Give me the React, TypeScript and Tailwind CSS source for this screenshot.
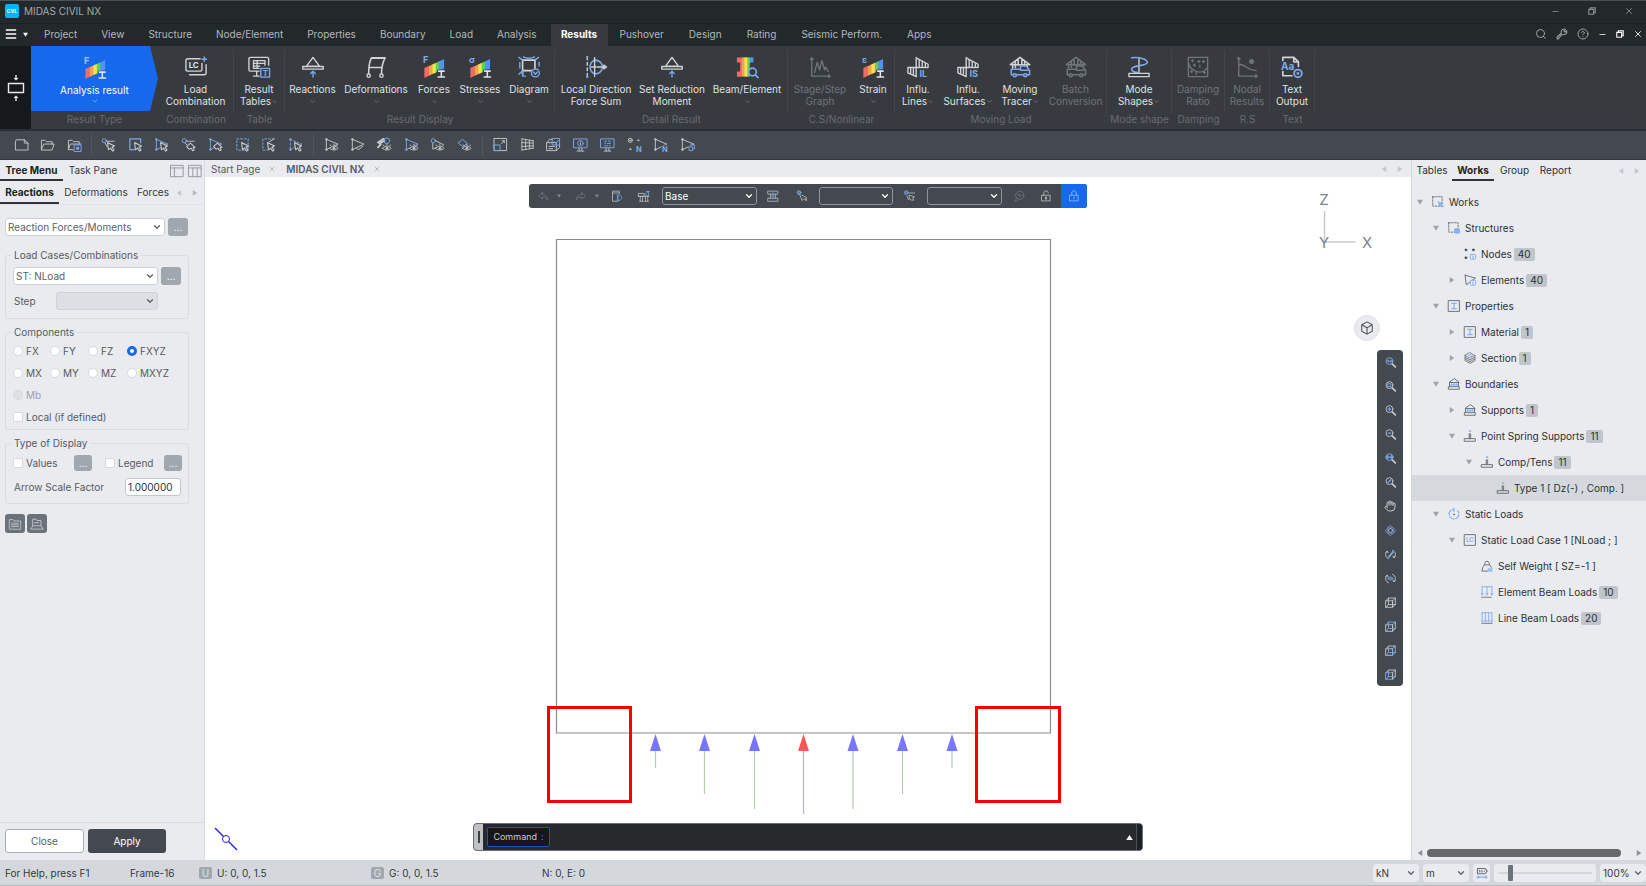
import React from "react";
import { ChevronDown, CircleHelp, Hand, Menu, Minus, Search, X } from "lucide-react";

const G = "#c3c7cb";
const B = "#7ea8ea";

type Kids = { children?: React.ReactNode };

/* ---------- drawing helpers ---------- */

function Ic({ children, s = "size-[15px]", box = 16, w = 1, c = G }: Kids & { s?: string; box?: number; w?: number; c?: string }) {
  return (
    <svg viewBox={`0 0 ${box} ${box}`} className={`${s} shrink-0 overflow-visible`} fill="none" stroke={c} strokeWidth={w} strokeLinecap="round" strokeLinejoin="round" aria-hidden="true">
      {children}
    </svg>
  );
}

const Cursor = () => <path d="M7 6l7.5 3.5-2.6 1.3 2 3-1.5 1.2-2.2-3.2L8 13.6z" fill="#43494f" strokeWidth="1.200" />;
const Lasso = () => <path d="M6 10l4-3.5L15 11l-2 .3 1 2.600-1.600.7-1.400-2.600L8.600 13z" fill="#43494f" strokeWidth="1.200" />;
const Tri = ({ c = G, dash }: { c?: string; dash?: string }) => (
  <>
    <path d="M2.500 2.500l12 5M2.500 2.500v11M2.500 13.500L14 8" stroke={c} strokeDasharray={dash} />
    <circle cx="2.500" cy="2.500" r=".9" stroke={c} />
    <circle cx="2.500" cy="13.500" r=".9" stroke={c} />
  </>
);
const Eye = () => (
  <>
    <path d="M6 12c2-3 7-3 9 0-2 2.600-7 2.600-9 0z" fill="#43494f" />
    <circle cx="10.500" cy="12" r="1.100" fill={G} />
    <path d="M7.500 9.500l-.8-1M10.500 8.500V7.500M13.500 9.500l.8-1" />
  </>
);
const Letter = ({ x, y, size, fill = B, children }: Kids & { x: number; y: number; size: number; fill?: string }) => (
  <text x={x} y={y} fontSize={size} fill={fill} stroke="none" fontFamily="Inter, sans-serif" fontWeight="700">{children}</text>
);

/* ---------- quick-access toolbar ---------- */

const fileTools: [string, React.ReactNode][] = [
  ["New", <path d="M1.500 13.500v-9l1-1.500h8.500l4 3.500v7zM11 3v3.500h4" />],
  ["Open", <path d="M1.500 13V3.500h4L7 5h6v2.500M1.500 13.500l2.500-6h11l-2 6z" />],
  ["Open recent", <><path d="M1.500 13V3.500h4L7 5h6v2M1.500 13.500l2-6H15M1.500 13.500h5" /><path d="M8 8.500h7v7H8z" stroke={B} /><path d="M10.500 11h2v2h-2z" fill={B} stroke={B} /></>],
];

const selectTools: [string, React.ReactNode][] = [
  ["Select single", <><circle cx="3.500" cy="4" r="2.200" stroke={B} /><path d="M6 4.500h8M4.500 6.500l2 4" /><Cursor /></>],
  ["Select window", <><path d="M13.500 6V2H2v11.500h5" stroke={B} strokeWidth="1.300" /><Cursor /></>],
  ["Select polygon", <><Tri c={B} /><Cursor /></>],
  ["Unselect single", <><circle cx="3.500" cy="4" r="2.200" stroke={B} /><path d="M6 4.500h8M4.500 6.500l2 2" /><Lasso /></>],
  ["Unselect polygon", <><Tri c={B} /><Lasso /></>],
  ["Select intersect", <><path d="M2 2h12v12H2z" stroke={B} strokeDasharray="2 2" /><Cursor /></>],
  ["Select plane", <><path d="M14 2H2v12h5" stroke={B} strokeDasharray="2 2" /><path d="M9 5l5-3" stroke={G} /><Cursor /></>],
  ["Select volume", <><Tri c={B} dash="2 2" /><Cursor /></>],
];

const activeTools: [string, React.ReactNode][] = [
  ["Activate", <><Tri /><Eye /></>],
  ["Inverse activate", <><Tri /><path d="M7 12l2 1.500 5-4" /></>],
  ["Activate previous", <><path d="M1 6l6-4M3 7l5-3M1 11l3-3" strokeWidth="2" /><circle cx="10.500" cy="4" r="3" stroke={B} /><Eye /></>],
  ["Activate identity", <><Tri c={B} /><Eye /></>],
  ["Activate node", <><circle cx="3.500" cy="4" r="2.200" stroke={B} /><path d="M6 4l8 4M3 7v6l4-2" /><Eye /></>],
  ["Activate all", <><path d="M1.500 6L6 2.500l5 4.500-4.500 3z" stroke={B} /><Eye /></>],
];

const viewTools: [string, React.ReactNode][] = [
  ["Zoom region", <><path d="M1.500 1.500h13v13h-13z" /><path d="M1.500 8.500h6v6h-6z" stroke={B} /><path d="M9 7l3-3M9.800 4H12v2.200" /></>],
  ["Perspective", <path d="M2 2l12 2M2 6l12 .5M2 10l12-.5M2 14l12-2M2 2v12M6 2.500v11M10 3.500v9M14 4v8" />],
  ["Render view", <><path d="M1 6h10v8.500H1zM1 6l3-3.500h3M14.500 9V11L11 14.500M3 10h6M3 12.500h4" /><path d="M7 1.500h7.500v7H7z" stroke={B} /><path d="M9 5l1.500 1.500 3-3" stroke={B} /></>],
  ["Display information", <><path d="M1 2h14v9.500H1z" stroke={B} /><circle cx="8" cy="6.800" r="3" stroke={B} /><path d="M8 6.500v1.500M8 5v.1M4.500 15h7M6.500 12v2.500M9.500 12v2.500" /></>],
  ["Display option", <><path d="M1 2h14v9.500H1z" stroke={B} /><path d="M5 4.500h2M9 4.500h2M5 7h1M8 7h3M5 9.500h3M10 9.500h1" stroke={B} /><path d="M4.500 15h7M6.500 12v2.500M9.500 12v2.500" /></>],
  ["Node number", <><circle cx="3.500" cy="3.500" r="2.200" /><circle cx="3.500" cy="3.500" r=".6" /><circle cx="12" cy="3.500" r=".6" fill={G} /><circle cx="3.500" cy="13" r=".6" fill={G} /><Letter x={9.500} y={15.500} size={8}>N</Letter></>],
  ["Element number", <><Tri /><rect x="9" y="9" width="7" height="7" fill="#43494f" stroke="none" /><Letter x={9.500} y={15.500} size={8}>N</Letter></>],
  ["Element property", <><Tri /><rect x="9" y="9" width="7" height="7" fill="#43494f" stroke="none" /><path d="M9.500 10.500h4v4h-4zM11.500 8.500h4v4h-2" stroke={B} strokeDasharray="2 1" /></>],
];

function ToolGroup({ tools, cls }: { tools: [string, React.ReactNode][]; cls: string }) {
  return (
    <div className={`grid ${cls}`}>
      {tools.map(([name, art]) => (
        <button key={name} type="button" aria-label={name} className="flex h-6 items-center justify-center">
          <Ic>{art}</Ic>
        </button>
      ))}
    </div>
  );
}

/* ---------- ribbon ---------- */

const Rainbow = ({ glyph, light }: { glyph: string; light?: boolean }) => (
  <>
    <g stroke="none">
      <path d="M1.500 13l4.600-2v10.500L1.500 24z" fill="#f56a66" />
      <path d="M6 11.200l4.300-2v10.500L6 21.700z" fill="#f9a04f" />
      <path d="M10 9.400l4.300-2v10.500L10 19.900z" fill="#f8e04e" />
      <path d="M14 7.500l4.300-2V16L14 18z" fill="#5fcf60" />
      <path d="M18 5.700l5-2.400v11L18 16.100z" fill="#4e93f5" />
    </g>
    <Letter x={0} y={8} size={10} fill={light ? "#9fc3ff" : B}>{glyph}</Letter>
    <path d="M17 16.800h6M20 17v6M16.500 23h7" stroke={light ? "#1668ec" : "#373b40"} strokeWidth="4" />
    <path d="M17 16.500h6M20 17v6M16.500 23h7" stroke="#e2e4e6" strokeWidth="1.700" />
  </>
);
const Truss = () => <path d="M1.500 9.500L12 1.500l10.500 8M3 9.500h18M4 9.500V13M7 6.500v6M10 4v6M14 4v6M17 6.500v4M20 8.500v3" strokeWidth="1.700" />;
const Truck = ({ c }: { c: string }) => (
  <g stroke={c} strokeWidth="1.700">
    <path d="M2.500 20v-5.500h10V11h6.500l3.500 5v4M2.500 20.500H4M8.500 20.500h7M20 20.500h2.500M12.500 15.500h8" />
    <circle cx="6.300" cy="21" r="1.700" />
    <circle cx="17.800" cy="21" r="1.700" />
  </g>
);
const Influence = ({ t }: { t: string }) => (
  <>
    <path d="M1 12.500h22M10 1.500V22M10 2l13 7v3.500M13.300 4v8.500M16.600 6v6.500M20 7.500v5M1 12.500v6l9 4M4 12.500v7M7 12.500v8" strokeWidth="1.500" />
    <rect x="12.500" y="14" width="12" height="10" fill="#373b40" stroke="none" />
    <Letter x={13.500} y={23} size={10}>{t}</Letter>
  </>
);

const art: Record<string, React.ReactNode> = {
  lc: <><path d="M16.500 3H3C1.800 3 1 3.800 1 5v9.500c0 1.200.8 2 2 2h13.500c1.200 0 2-.8 2-2V8M5 20.500h16c1.200 0 2-.8 2-2V9.500" /><path d="M21 1v5M18.500 3.500h5" stroke={B} /><Letter x={4} y={13} size={8.500} fill="#e2e4e6">LC</Letter></>,
  tables: <><path d="M12 16.500H2.500c-1 0-1.500-.5-1.500-1.500V3c0-1 .5-1.500 1.500-1.500h18.500c1 0 1.500.5 1.500 1.500v7M6 22h6M9.500 17v5M6 5h12.500v5M6 5v8.500h6M6 8h12M6 11h7M10 5v8.500" /><path d="M14 13.500h9.500v9.500H14z" stroke={B} fill="#373b40" /><Letter x={16} y={21.500} size={8.500}>T</Letter></>,
  reactions: <><path d="M12 1.500L5 11h14zM.8 11.500h22.400v2.800H.8z" /><path d="M12 23v-6M9.500 19l2.500-2.500 2.500 2.500" stroke={B} /></>,
  deform: <><path d="M4 20V18C4 11 5 6 7 2h15c-3 5-4 10-4 18M5 12.500h13M6.500 2.500h15" strokeWidth="1.700" /><circle cx="4" cy="21.500" r="1.800" fill="#373b40" /><circle cx="18" cy="21.500" r="1.800" fill="#373b40" /></>,
  diagram: <><path d="M5 4v16M18.500 4v12M5 4.500h13.500M5 16h11" strokeWidth="1.800" /><path d="M1 1.500l4 3M22.500 1.500l-4 3M1 20l4-4M6 1c3 2 9 2 12 0M5 17v5h3M2 7v6M23 7v4" stroke={B} /><circle cx="19" cy="18.500" r="4.300" stroke={B} fill="#373b40" /><path d="M17 17.500l2 2.500 2-2.500" stroke={B} /></>,
  direction: <><path d="M2.500 1v22" strokeDasharray="3 3" /><path d="M2.500 1v.1M2.500 23v-.1" stroke={B} strokeWidth="2.500" /><path d="M10 4.500c-6 4-6 11 0 15M10 4.500c8 0 9 6 9 7.500s-1 7.500-9 7.500" stroke={B} strokeWidth="1.700" /><path d="M7 12h14M10.500 2v20" strokeDasharray="5 1.500" strokeWidth="1.600" /><path d="M20.500 10l3 2-3 2z" fill={G} /></>,
  beam: <><path d="M1 1.500h6v21H1V17h3.500V7H1z" fill="#f56a66" stroke="none" /><path d="M6.500 1.500h3v21h-3z" fill="#f9a04f" stroke="none" /><path d="M9 1.500h4v21H9z" fill="#f8e04e" stroke="none" /><path d="M12.500 1.500H16V7l-1 1v14.500h-2.500z" fill="#5fcf60" stroke="none" /><path d="M15.500 1.500H19V7h-3.500z" fill="#4e93f5" stroke="none" /><circle cx="18" cy="17.500" r="4.200" stroke={B} fill="#373b40" strokeWidth="1.800" /><path d="M21 20.500l3 3" stroke={B} strokeWidth="1.800" /></>,
  graph: <path d="M3 2v20h20M1.500 3.500L3 2l1.500 1.500M21.500 20.500L23 22l-1.500 1.500M6 18l3-11 2.500 8L14 5l3 10 1-3 3 5" />,
  mode: <><path d="M12 1.500V18" /><path d="M4 2c8-1 17 1 17 5s-17 3-17 7 4 4 8 4" stroke={B} strokeWidth="1.700" /><path d="M1 19h22v3.500H1z" /></>,
  damping: <><path d="M1.500 1.500h21v21h-21z" /><path d="M1.500 8c3 9 15 14 21 4" /><path d="M6 4v2M5 5h2M13 5v2M12 6h2M18 5v2M17 6h2M8 9v2M7 10h2M14 10v2M5 16v2M4 17h2M10 18v2M19 17v2M18 18h2" /></>,
  nodal: <><path d="M3 1.500v20.500h20M1.500 3L3 1.500 4.500 3M21.500 20.500L23 22l-1.500 1.500M3 9c9 0 7 6 19 7" /><circle cx="17" cy="6" r="2" fill="currentColor" /></>,
  text: <><path d="M2 5V1.500h12l5 5v5M14 1.500v5h5M2 17v4.500h10" strokeWidth="1.800" /><Letter x={0} y={15} size={11}>Aa</Letter><circle cx="18.500" cy="19" r="4.200" stroke={B} fill="#373b40" strokeWidth="2" /><circle cx="18.500" cy="19" r=".8" fill={B} stroke={B} /></>,
};

type Item = { a: React.ReactNode; l1: string; l2?: string; drop?: boolean; w: string; off?: boolean };

const groups: { name: string; items: Item[] }[] = [
  { name: "Combination", items: [{ a: art.lc, l1: "Load", l2: "Combination", w: "w-[75px]" }] },
  { name: "Table", items: [{ a: art.tables, l1: "Result", l2: "Tables", drop: true, w: "w-[50px]" }] },
  {
    name: "Result Display",
    items: [
      { a: art.reactions, l1: "Reactions", drop: true, w: "w-[55px]" },
      { a: art.deform, l1: "Deformations", drop: true, w: "w-[72px]" },
      { a: <Rainbow glyph="F" />, l1: "Forces", drop: true, w: "w-[44px]" },
      { a: <Rainbow glyph="σ" />, l1: "Stresses", drop: true, w: "w-[48px]" },
      { a: art.diagram, l1: "Diagram", drop: true, w: "w-[50px]" },
    ],
  },
  {
    name: "Detail Result",
    items: [
      { a: art.direction, l1: "Local Direction", l2: "Force Sum", w: "w-[82px]" },
      { a: art.reactions, l1: "Set Reduction", l2: "Moment", w: "w-[70px]" },
      { a: art.beam, l1: "Beam/Element", drop: true, w: "w-[80px]" },
    ],
  },
  {
    name: "C.S/Nonlinear",
    items: [
      { a: art.graph, l1: "Stage/Step", l2: "Graph", w: "w-[64px]", off: true },
      { a: <Rainbow glyph="ε" />, l1: "Strain", drop: true, w: "w-[42px]" },
    ],
  },
  {
    name: "Moving Load",
    items: [
      { a: <Influence t="IL" />, l1: "Influ.", l2: "Lines", drop: true, w: "w-[46px]" },
      { a: <Influence t="IS" />, l1: "Influ.", l2: "Surfaces", drop: true, w: "w-[54px]" },
      { a: <><Truss /><Truck c={B} /></>, l1: "Moving", l2: "Tracer", drop: true, w: "w-[50px]" },
      { a: <><Truss /><Truck c="#6f7479" /></>, l1: "Batch", l2: "Conversion", w: "w-[61px]", off: true },
    ],
  },
  { name: "Mode shape", items: [{ a: art.mode, l1: "Mode", l2: "Shapes", drop: true, w: "w-[64px]" }] },
  { name: "Damping", items: [{ a: art.damping, l1: "Damping", l2: "Ratio", w: "w-[52px]", off: true }] },
  { name: "R.S", items: [{ a: art.nodal, l1: "Nodal", l2: "Results", w: "w-[44px]", off: true }] },
  { name: "Text", items: [{ a: art.text, l1: "Text", l2: "Output", w: "w-[44px]" }] },
];

function RibbonButton({ it }: { it: Item }) {
  return (
    <button type="button" disabled={it.off} className={`flex h-[52px] flex-col items-center whitespace-nowrap leading-[12px] ${it.w} ${it.off ? "text-[#6f7479]" : "text-[#dfe1e3]"}`}>
      <Ic s="size-[22px]" box={24} w={1.500} c={it.off ? "#6f7479" : "#d0d3d6"}>{it.a}</Ic>
      <span className="mt-[5px]">{it.l1}</span>
      <span className="flex h-3 items-center">
        {it.l2}
        {it.drop && <ChevronDown className="size-[7px] text-[#8b9096]" />}
      </span>
    </button>
  );
}

function Ribbon() {
  return (
    <div className="flex h-[85px] shrink-0 border-b-2 border-[#2a2e36] bg-[#373b40]">
      <button type="button" aria-label="Collapse ribbon" className="flex w-[31px] items-center justify-center bg-[#16191c]">
        <svg viewBox="0 0 18 28" className="h-7 w-[18px]" fill="none" stroke="#e8eaec" strokeWidth="1.400" aria-hidden="true">
          <path d="M1.500 9.500h15v9h-15zM9 1v4M9 23v4" />
          <path d="M6.500 4h5L9 6.500zM6.500 24h5L9 21.500z" fill="#e8eaec" stroke="none" />
        </svg>
      </button>
      <div className="flex w-[127px] flex-col">
        <button type="button" className="flex h-[65px] w-full flex-col items-center bg-[#1668ec] pt-[11px] leading-[12px] text-white [clip-path:polygon(0_0,119px_0,100%_50%,119px_100%,0_100%)]">
          <Ic s="size-[22px]" box={24} w={1.500}><Rainbow glyph="F" light /></Ic>
          <span className="mt-[5px]">Analysis result</span>
          <ChevronDown className="mt-px size-2 text-[#9cc0f8]" />
        </button>
        <span className="pt-[2px] text-center leading-[12px] text-[#676c72]">Result Type</span>
      </div>
      {groups.map((g) => (
        <div key={g.name} className="flex flex-col pt-1">
          <div className="flex h-[63px] border-r border-[#42464b] pt-[6px]">
            {g.items.map((it) => <RibbonButton key={it.l1 + it.l2} it={it} />)}
          </div>
          <span className="text-center leading-[12px] text-[#676c72]">{g.name}</span>
        </div>
      ))}
    </div>
  );
}

/* ---------- small controls ---------- */

function Select({ label, value, cls, box, chev = "text-[#5b6167]", disabled }: { label: string; value: string; cls: string; box: string; chev?: string; disabled?: boolean }) {
  return (
    <span className={`grid items-center ${cls}`}>
      <select aria-label={label} disabled={disabled} className={`col-start-1 row-start-1 h-full w-full appearance-none rounded-[3px] border pl-[2px] outline-none ${box}`}>
        <option>{value}</option>
      </select>
      <ChevronDown className={`pointer-events-none col-start-1 row-start-1 mr-[3px] size-[10px] justify-self-end ${chev}`} strokeWidth={3} />
    </span>
  );
}

const Dots = ({ label, cls }: { label: string; cls: string }) => (
  <button type="button" aria-label={label} className={`flex items-center justify-center rounded-[3px] bg-[#a1a7ae] leading-none text-white ${cls}`}>...</button>
);

const Arrow = ({ d, s = "size-[6px]", c = "text-[#c3c7cc]" }: { d: "l" | "r" | "d"; s?: string; c?: string }) => (
  <svg viewBox="0 0 8 8" className={`${s} shrink-0 ${c}`} fill="currentColor" aria-hidden="true">
    <path d={d === "l" ? "M7 0v8L1 4z" : d === "r" ? "M1 0v8l6-4z" : "M0 1h8L4 7.500z"} />
  </svg>
);

function Radio({ label, checked, disabled }: { label: string; checked?: boolean; disabled?: boolean }) {
  return (
    <label className={`flex h-[22px] items-center gap-[3px] ${disabled ? "text-[#9ba0a6]" : ""}`}>
      <input type="radio" name="component" defaultChecked={checked} disabled={disabled} className="size-[10px] appearance-none rounded-full border border-[#d5d9de] bg-white checked:border-[3px] checked:border-[#1668ec] disabled:bg-[#dde0e4]" />
      {label}
    </label>
  );
}

function Check({ label, cls = "" }: { label: string; cls?: string }) {
  return (
    <label className={`flex h-[22px] items-center gap-[3px] ${cls}`}>
      <input type="checkbox" className="size-[10px] appearance-none rounded-[2px] border border-[#d5d9de] bg-white checked:bg-[#1668ec]" />
      {label}
    </label>
  );
}

function Group({ title, cls, children }: Kids & { title: string; cls: string }) {
  return (
    <fieldset className={`w-[184px] rounded-[3px] border border-[#d9dce1] pl-[5px] ${cls}`}>
      <legend className="px-[3px] leading-[12px]">{title}</legend>
      <div className="pl-[2px]">{children}</div>
    </fieldset>
  );
}

/* ---------- left panel ---------- */

const whiteBox = "border-[#cdd2d8] bg-white text-[#5b6167]";

function LeftPanel() {
  return (
    <aside className="flex w-[205px] shrink-0 flex-col border-r border-[#d9dce1] bg-[#e9ebef] text-[#555b61]">
      <div className="flex h-[21px] shrink-0 items-stretch">
        <button type="button" className="w-[63px] border-b-2 border-[#2f3439] font-bold text-[#1d2125]">Tree Menu</button>
        <button type="button" className="w-[60px] border-b-2 border-transparent text-[#33383d]">Task Pane</button>
        <span className="ml-auto flex items-center gap-1 pr-[2px]">
          <Ic s="size-[14px]" c="#8b9197"><path d="M1 1.500h14v13H1zM1 4.500h14M5 4.500v10" /></Ic>
          <Ic s="size-[14px]" c="#8b9197"><path d="M1 1.500h14v13H1zM1 4.500h14M5.500 4.500v10M10.500 4.500v10" /></Ic>
        </span>
      </div>
      <div className="flex h-6 shrink-0 items-stretch border-b border-[#e0e3e7] text-[#33383d]">
        <button type="button" className="w-[59px] border-b-2 border-[#2f3439] font-bold text-[#1d2125]">Reactions</button>
        <button type="button" className="w-[74px] border-b-2 border-transparent">Deformations</button>
        <button type="button" className="w-[40px] border-b-2 border-transparent">Forces</button>
        <span className="flex flex-1 items-center justify-between pl-[3px] pr-[6px]"><Arrow d="l" /><Arrow d="r" c="text-[#b3b8be]" /></span>
      </div>

      <div className="flex flex-col gap-[7px] pl-[5px] pt-[13px]">
        <div className="mb-[6px] flex gap-[3px]">
          <Select label="Result" value="Reaction Forces/Moments" cls="h-[18px] w-[160px]" box={whiteBox} />
          <Dots label="Result list" cls="h-[18px] w-5" />
        </div>

        <Group title="Load Cases/Combinations" cls="pb-[8px] pt-[6px]">
          <div className="flex gap-[3px]">
            <Select label="Load case" value="ST: NLoad" cls="h-[18px] w-[145px]" box={whiteBox} />
            <Dots label="Load cases" cls="h-[18px] w-5" />
          </div>
          <div className="mt-[7px] flex items-center">
            <span className="w-[43px] pl-px">Step</span>
            <Select label="Step" value="" disabled cls="h-[18px] w-[102px]" box="border-[#cdd2d8] bg-[#dcdfe3]" />
          </div>
        </Group>

        <Group title="Components" cls="pb-px pt-[2px]">
          <div className="grid grid-cols-[37px_38px_39px_auto]">
            <Radio label="FX" /><Radio label="FY" /><Radio label="FZ" /><Radio label="FXYZ" checked />
            <Radio label="MX" /><Radio label="MY" /><Radio label="MZ" /><Radio label="MXYZ" />
          </div>
          <Radio label="Mb" disabled />
          <Check label="Local (if defined)" />
        </Group>

        <Group title="Type of Display" cls="pb-[7px] pt-[3px]">
          <div className="flex items-center">
            <Check label="Values" cls="w-[61px]" />
            <Dots label="Value options" cls="h-4 w-[18px]" />
            <Check label="Legend" cls="ml-[13px] w-[59px]" />
            <Dots label="Legend options" cls="h-4 w-[18px]" />
          </div>
          <label className="mt-[4px] flex items-center">
            <span className="w-[112px] pl-px">Arrow Scale Factor</span>
            <input type="text" defaultValue="1.000000" className="h-[18px] w-[56px] rounded-[3px] border border-[#c3c8ce] bg-white pl-[2px] text-[#2b3035] outline-none" />
          </label>
        </Group>

        <div className="mt-[3px] flex gap-[2px]">
          <button type="button" aria-label="Open settings" className="flex h-[19px] w-5 items-center justify-center rounded-[3px] bg-[#6b7279]">
            <Ic s="size-[14px]"><path d="M1.500 13.500V3h4.500l1 1.500h7.500v9zM4 7h8M4 9h8M4 11h8" /></Ic>
          </button>
          <button type="button" aria-label="Save settings" className="flex h-[19px] w-5 items-center justify-center rounded-[3px] bg-[#6b7279]">
            <Ic s="size-[14px]"><path d="M3 10V2.500h4l1 1.500h4.500v6M1 13.500L3.500 10h9l2.500 3.500zM5 6.500h5" /></Ic>
          </button>
        </div>
      </div>

      <div className="mt-auto flex h-[38px] gap-1 border-t border-[#d9dce1] pl-[5px] pt-[6px]">
        <button type="button" className="h-6 w-[79px] rounded-[3px] border border-[#a9aeb4] bg-white">Close</button>
        <button type="button" className="h-6 w-[78px] rounded-[3px] bg-[#43494f] text-white">Apply</button>
      </div>
    </aside>
  );
}

/* ---------- model view ---------- */

const supports = [
  { x: 655.500, end: 768 }, { x: 704.500, end: 794 }, { x: 754.500, end: 809 }, { x: 803.500, end: 814, max: true },
  { x: 853, end: 809 }, { x: 902.500, end: 794 }, { x: 952, end: 768 },
];

function Model() {
  return (
    <svg viewBox="205 177 1206 683" className="absolute inset-0 size-full" fill="none" aria-label="Frame model with support reactions">
      <path d="M556.500 239.500h494v493.500h-494z" stroke="#8c8c8c" strokeWidth="1.200" />
      {supports.map((s) => (
        <g key={s.x}>
          <path d={`M${s.x} 750V${s.end}`} stroke={s.max ? "#b4b0e6" : "#b5cdb5"} strokeWidth="1.200" />
          <path d={`M${s.x} 734l5.500 17h-11z`} fill={s.max ? "#ff5555" : "#7676ff"} />
        </g>
      ))}
      <path d="M548.500 707.500h82v94h-82zM976.500 707.500h83v94h-83z" stroke="#fb0000" strokeWidth="3" />
      <path d="M1324.500 211v31h31" stroke="#c5cad0" strokeWidth="1.500" />
      <g fill="#7d848b" fontFamily="Inter, sans-serif" fontSize="15" textAnchor="middle">
        <text x="1324" y="205">Z</text>
        <text x="1324" y="248">Y</text>
        <text x="1367" y="248">X</text>
      </g>
      <g stroke="#2a22f0" strokeWidth="1.500">
        <path d="M215 828l22 22" />
        <circle cx="226" cy="839" r="3.500" fill="#fff" strokeWidth="1" />
      </g>
    </svg>
  );
}

const Glass = ({ c = G, children }: Kids & { c?: string }) => (
  <><circle cx="6.500" cy="6" r="5" stroke={c} strokeWidth="1.300" /><path d="M10.500 10l4.500 4.500" strokeWidth="2.500" />{children}</>
);
const Cube = ({ f }: { f: number }) => (
  <g strokeWidth="1.300">
    <path d="M1.500 5.500H11V15H1.500z" stroke={f === 3 ? B : G} />
    <path d="M1.500 5.500L5 1.500h10l-4 4" stroke={f === 1 ? B : G} />
    <path d="M15 1.500v9.500l-4 4V5.500" stroke={f === 2 ? B : G} />
    <path d="M5 1.500V11h10M5 11l-3.500 4" stroke={f === 0 ? G : B} />
  </g>
);
const Orbit = () => <path d="M3 3.500c-4 4-2 9 2 10.500M13 12.500c4-4 2-9-2-10.500M1 5l2-2 1.500 2.500M15 11l-2 2-1.500-2.500" strokeWidth="1.400" />;

const navTools: [string, React.ReactNode][] = [
  ["Zoom fit", <Glass c={B}><path d="M3.500 6h6M5 4.500L3.500 6 5 7.500M8 4.500L9.500 6 8 7.500" stroke={B} strokeWidth="1.400" /></Glass>],
  ["Zoom window", <Glass><path d="M4.500 4h4v4h-4z" stroke={B} strokeWidth="1.400" /></Glass>],
  ["Zoom in", <Glass><path d="M4.500 6h4M6.500 4v4" stroke={B} strokeWidth="1.600" /></Glass>],
  ["Zoom out", <Glass><path d="M4.500 6h4" stroke={B} strokeWidth="1.600" /></Glass>],
  ["Auto fit", <Glass c={B}><path d="M1 6h11M4 3.500v5M9 3.500v5" stroke={B} strokeWidth="1.600" /></Glass>],
  ["Zoom dynamic", <Glass><path d="M4.500 8l4-4" stroke={B} strokeWidth="1.600" /></Glass>],
  ["Pan", null],
  ["Rotate free", <><path d="M8 .5l3.500 3.500h-7zM8 15.500l3.500-3.500h-7zM.5 8L4 4.500v7zM15.500 8L12 4.500v7z" stroke={B} /><circle cx="8" cy="8" r="3" /></>],
  ["Rotate dynamic", <><Orbit /><path d="M5.500 11.500l6-7" stroke={B} strokeWidth="2.500" /></>],
  ["Rotate view", <><Orbit /><path d="M4 8c2-3 6-3 8 0-2 3-6 3-8 0z" stroke={B} fill={B} fillOpacity=".5" /></>],
  ["Iso view", <Cube f={0} />],
  ["Top view", <Cube f={1} />],
  ["Right view", <Cube f={2} />],
  ["Front view", <Cube f={3} />],
];

const darkBox = "border-[#8d9399] bg-[#43494f] text-white";

const FloatBtn = ({ label, w, dim, children }: Kids & { label: string; w: string; dim?: boolean }) => (
  <button type="button" aria-label={label} className={`flex h-6 shrink-0 items-center justify-center ${w} ${dim ? "opacity-40" : ""}`}>
    <Ic s="size-3">{children}</Ic>
  </button>
);

function Viewport() {
  return (
    <main className="flex min-w-0 flex-1 flex-col">
      <div className="flex h-[17px] shrink-0 items-center bg-[#e9ebef] text-[#555b61]">
        <button type="button" className="flex items-center gap-2 pl-[6px]">Start Page <X className="size-2 text-[#9ba0a6]" /></button>
        <button type="button" className="flex items-center gap-2 pl-[10px] font-semibold">MIDAS CIVIL NX <X className="size-2 text-[#9ba0a6]" /></button>
        <span className="ml-auto flex gap-[10px] pr-2"><Arrow d="l" /><Arrow d="r" /></span>
      </div>
      <div className="relative flex flex-1 flex-col items-center justify-between bg-white pb-[9px] pt-[7px]">
        <Model />
        <div className="relative flex h-6 w-[558px] items-center overflow-hidden rounded-[3px] bg-[#43494f]">
          <FloatBtn label="Undo" w="w-7" dim><path d="M7 3L2 8l5 4V9.500c4 0 6 .5 7 3.500 0-5-3-7-7-7z" /></FloatBtn>
          <span className="flex w-[10px] opacity-50"><Arrow d="d" s="size-1" /></span>
          <FloatBtn label="Redo" w="w-7" dim><path d="M9 3l5 5-5 4V9.500c-4 0-6 .5-7 3.500 0-5 3-7 7-7z" /></FloatBtn>
          <span className="flex w-[8px] opacity-50"><Arrow d="d" s="size-1" /></span>
          <FloatBtn label="Stage history" w="w-7"><path d="M9 15H2V1.500h9v3M2 4h9" /><path d="M10 6.500c6 0 6 7.500 0 7.500zM8.500 6.500v8" stroke={B} /></FloatBtn>
          <FloatBtn label="Structure type" w="w-[26px]"><path d="M1 4.500h7v4H1zM1 8.500h14M3 9v6M6 9v6M10 9v6M13 9v6M2 15h5M9 15h5" /><path d="M9 6l5-4v5zM11 2h4" stroke={B} /></FloatBtn>
          <Select label="Stage" value="Base" cls="ml-[5px] h-[18px] w-[95px]" box={darkBox} chev="text-white" />
          <FloatBtn label="Result stage" w="w-8"><path d="M1.500 1.500h13v4h-13zM1.500 11h13v4h-13zM4.500 5.500V11M11.500 5.500V11" /><path d="M6 8h4M8 3v9" stroke={B} /></FloatBtn>
          <FloatBtn label="Select node" w="w-[26px]"><circle cx="4" cy="3.500" r="2.500" stroke={B} fill={B} fillOpacity=".5" /><path d="M5 6l3 8 2-2h3l1 2M8 7l6 3-1 4" /></FloatBtn>
          <Select label="Nodes" value="" cls="ml-1 h-[18px] w-[74px]" box={darkBox} chev="text-white" />
          <FloatBtn label="Select element" w="w-[34px]"><circle cx="3" cy="3.500" r="2.500" stroke={B} fill={B} fillOpacity=".5" /><path d="M7 4h7M4 8l2 5M7 7l7 2-2.500 1.500 1.500 3h-3l-2-1z" /></FloatBtn>
          <Select label="Elements" value="" cls="h-[18px] w-[75px]" box={darkBox} chev="text-white" />
          <FloatBtn label="Query" w="w-[34px]" dim><circle cx="9" cy="7" r="5.500" /><path d="M6 7h1l1-2 2 4 1-2h1M5 11.500l-3 3h4" /></FloatBtn>
          <FloatBtn label="Unlock" w="w-[20px]"><path d="M2.500 7h11v7.500h-11zM5 7V4c0-4 6-4 6 0" /><path d="M8 9.500v2.500" strokeWidth="2" /></FloatBtn>
          <span className="ml-auto flex bg-[#1668ec]">
            <FloatBtn label="Lock" w="w-[26px]"><path d="M2.500 7h11v7.500h-11zM5 7V4c0-4 6-4 6 0v3M8 9.500v2.500" stroke="#9cc3ff" /></FloatBtn>
          </span>
        </div>

        <div className="relative flex h-7 w-[670px] items-center overflow-hidden rounded-[4px] border border-[#6b6f74] bg-[#27292d]">
          <span className="flex h-full w-[9px] items-center justify-center bg-[#bfc1c3]"><span className="h-3 w-[2px] bg-[#3d4247]" /></span>
          <span className="ml-1 flex h-5 w-[63px] items-center justify-center gap-1 rounded-[2px] border border-[#1a56b8] bg-[#14171b] text-[9px] text-[#c9ccd0]">
            Command <span className="text-[#3f8cff]">:</span>
          </span>
          <input type="text" aria-label="Command" className="min-w-0 flex-1 bg-transparent pl-2 text-white outline-none" />
          <svg viewBox="0 0 8 6" className="mr-[3px] h-[5px] w-[7px]" fill="#fff" aria-hidden="true"><path d="M4 0l4 6H0z" /></svg>
          <span className="h-full w-[6px] border-l border-[#4c5157] bg-[#1c2126]" />
        </div>

        <button type="button" aria-label="View cube" className="absolute right-[31px] top-[138px] flex size-[26px] items-center justify-center rounded-full border border-[#dddfe3] bg-[#e9ebef]">
          <Ic s="size-[14px]" c="#555b61" w={1.300}><path d="M8 1l6 3.300v7.400L8 15l-6-3.300V4.300zM2 4.300l6 3.400 6-3.400M8 7.700V15" /></Ic>
        </button>
        <div className="absolute right-2 top-[173px] flex w-[26px] flex-col rounded-[4px] bg-[#43494f]">
          {navTools.map(([name, a]) => (
            <button key={name} type="button" aria-label={name} className="flex h-6 items-center justify-center">
              {a ? <Ic s="size-[11px]">{a}</Ic> : <Hand className="size-3 text-[#c3c7cb]" />}
            </button>
          ))}
        </div>
      </div>
    </main>
  );
}

/* ---------- works tree ---------- */

const T = "#6b7178";
const S = "#8ab0ee";
const springArt = <><path d="M.8 11.500h14.400V15H.8z" stroke={T} strokeWidth="1.300" /><path d="M7 5h2v6.500H7z" fill={T} stroke={T} strokeWidth=".6" /><circle cx="8" cy="1.500" r=".9" stroke={S} fill={S} /></>;
const supportArt = <><path d="M8 1L1.500 6h13zM1 11.500h14V15H1zM2 6v5M14 6v5" strokeWidth="1.300" /><path d="M3 9h10M5 7v3.500M8 7v3.500M11 7v3.500" stroke={S} strokeWidth="1.300" /></>;
const propArt = <><path d="M.8.8h14.400v14.400H.8z" strokeWidth="1.300" /><path d="M5 4.500h6M8 4.500v7M5 11.500h6" stroke={S} strokeWidth="1.600" /></>;
const treeArt: Record<string, React.ReactNode> = {
  works: <><path d="M1 1h12.500v12.500H1z" strokeDasharray="2 2" strokeWidth="1.300" /><path d="M8 8l2.500 5.500 1.500-2 2.500 3.500 1-1-3-3 2-1z" stroke={S} fill={S} /></>,
  struct: <><path d="M1 1h12.500v12.500H1z" strokeDasharray="2 2" strokeWidth="1.300" /><rect x="8.500" y="9" width="7" height="6" rx="1.500" fill={S} stroke={S} /></>,
  nodes: <><g fill="#444a50" stroke="#444a50"><circle cx="2.500" cy="2.500" r="1.300" /><circle cx="12.500" cy="2.500" r="1.300" /><circle cx="2.500" cy="13" r="1.300" /></g><rect x="8.500" y="8.500" width="7" height="6.500" rx="1" stroke={S} strokeWidth="1.300" /><path d="M12 10.500v3" stroke={S} strokeWidth="1.500" /></>,
  elem: <><path d="M1.500 1.500l13.500 4M1.500 1.500l1.500 13L15 5.500" strokeWidth="1.300" /><rect x="8.500" y="8.500" width="7" height="6.500" rx="1" stroke={S} strokeWidth="1.300" fill="#e9ebef" /><path d="M12 10.500v3" stroke={S} strokeWidth="1.500" /></>,
  prop: propArt,
  section: <><path d="M8 .8l6.500 3.700L8 8 1.500 4.500z" /><path d="M5 3.500l5 2.500M8 3l3 1.500" stroke={S} strokeWidth="1.300" /><path d="M1.500 4.500v7L8 15.200l6.500-3.700v-7M1.500 7L8 10.500 14.500 7M1.500 9.300L8 12.800l6.500-3.500" strokeWidth="1.200" /></>,
  support: supportArt,
  spring: springArt,
  loads: <><path d="M4 3a6.500 6.500 0 1 0 9 1" stroke={S} strokeWidth="1.600" strokeDasharray="7 2" /><path d="M8 .5v4M6 2.500L8 .5" stroke={S} strokeWidth="1.500" /><circle cx="8" cy="8.500" r=".8" fill={T} /></>,
  lc: <><path d="M.8.8h14.400v14.400H.8z" strokeWidth="1.300" /><Letter x={2.500} y={11} size={8} fill={S}>LC</Letter></>,
  weight: <><path d="M9 14.800H1l2-6.500c.5-1.500 1-1.800 2-1.800h6c1 0 1.500.3 2 1.800l.5 1.500M5 6.500C3 0 13 0 11 6.500" strokeWidth="1.300" /><Letter x={8.500} y={15.500} size={8} fill={S}>w</Letter></>,
  beam: <><path d="M1.500 1h13M1.500 1v11M8 1v11M14.500 1v11M.3 10l1.200 2 1.200-2M6.800 10L8 12l1.200-2M13.300 10l1.200 2 1.200-2" stroke={S} strokeWidth="1.300" /><path d="M1 15h14" strokeDasharray="2 1.500" strokeWidth="1.300" /></>,
  line: <><path d="M1.500 1h13M1.500 1v11M5.800 1v11M10.200 1v11M14.500 1v11M.5 12h15" stroke={S} strokeWidth="1.300" /><path d="M1 15h14" strokeWidth="1.300" /></>,
};

const tree: { d: string; t: string; icon: string; a?: "d" | "r"; n?: number; on?: boolean }[] = [
  { d: "pl-[5px]", t: "Works", icon: "works", a: "d" },
  { d: "pl-[21px]", t: "Structures", icon: "struct", a: "d" },
  { d: "pl-[37px]", t: "Nodes", icon: "nodes", n: 40 },
  { d: "pl-[37px]", t: "Elements", icon: "elem", a: "r", n: 40 },
  { d: "pl-[21px]", t: "Properties", icon: "prop", a: "d" },
  { d: "pl-[37px]", t: "Material", icon: "prop", a: "r", n: 1 },
  { d: "pl-[37px]", t: "Section", icon: "section", a: "r", n: 1 },
  { d: "pl-[21px]", t: "Boundaries", icon: "support", a: "d" },
  { d: "pl-[37px]", t: "Supports", icon: "support", a: "r", n: 1 },
  { d: "pl-[37px]", t: "Point Spring Supports", icon: "spring", a: "d", n: 11 },
  { d: "pl-[54px]", t: "Comp/Tens", icon: "spring", a: "d", n: 11 },
  { d: "pl-[70px]", t: "Type 1 [ Dz(-) , Comp. ]", icon: "spring", on: true },
  { d: "pl-[21px]", t: "Static Loads", icon: "loads", a: "d" },
  { d: "pl-[37px]", t: "Static Load Case 1 [NLoad ; ]", icon: "lc", a: "d" },
  { d: "pl-[54px]", t: "Self Weight [ SZ=-1 ]", icon: "weight" },
  { d: "pl-[54px]", t: "Element Beam Loads", icon: "beam", n: 10 },
  { d: "pl-[54px]", t: "Line Beam Loads", icon: "line", n: 20 },
];

function RightPanel() {
  return (
    <aside className="flex w-[235px] shrink-0 flex-col border-l border-[#d3d7dc] bg-[#e9ebef] text-[#2c3136]">
      <div className="flex h-[21px] shrink-0 items-stretch">
        <button type="button" className="w-[40px] border-b-2 border-transparent">Tables</button>
        <button type="button" className="w-[42px] border-b-2 border-[#2f3439] font-bold text-[#1d2125]">Works</button>
        <button type="button" className="w-[41px] border-b-2 border-transparent">Group</button>
        <button type="button" className="w-[41px] border-b-2 border-transparent">Report</button>
        <span className="ml-auto flex items-center gap-[10px] pr-[6px]"><Arrow d="l" /><Arrow d="r" /></span>
      </div>
      <ul className="pt-[8px]">
        {tree.map((r) => (
          <li key={r.t} className={`flex h-[26px] items-center whitespace-nowrap ${r.d} ${r.on ? "bg-[#d5d9dd]" : ""}`}>
            <span className="flex w-[15px] shrink-0">{r.a && <Arrow d={r.a} c="text-[#9da3a9]" />}</span>
            <Ic s="size-[12px]" c={T}>{treeArt[r.icon]}</Ic>
            <span className="ml-[5px]">{r.t}</span>
            {r.n && <span className="ml-[2px] rounded-[2px] bg-[#bfc5ca] px-1 leading-[13px]">{r.n}</span>}
          </li>
        ))}
      </ul>
      <div className="mt-auto flex h-[15px] items-center pl-[5px] pr-1">
        <Arrow d="l" c="text-[#8b9197]" />
        <span className="ml-1 mr-[15px] h-2 flex-1 rounded-full bg-[#66686b]" />
        <Arrow d="r" c="text-[#8b9197]" />
      </div>
    </aside>
  );
}

/* ---------- frame of the window ---------- */

const menusA = ["Project", "View", "Structure", "Node/Element", "Properties", "Boundary", "Load", "Analysis"];
const menusB = ["Pushover", "Design", "Rating", "Seismic Perform.", "Apps"];

const Restore = () => (
  <svg viewBox="0 0 10 10" className="size-2" fill="none" stroke="currentColor" strokeWidth="1.400" aria-hidden="true">
    <path d="M1 3h6v6H1zM3 3V1h6v6H7" />
  </svg>
);

function StatusBar() {
  const box = "border-[#e9ebef] bg-[#e9ebef] text-[#33383d]";
  return (
    <footer className="flex h-[26px] shrink-0 items-center border-b border-[#b4b9bf] bg-[#d4d8dd] text-[#33383d]">
      <span className="w-[130px] pl-[5px]">For Help, press F1</span>
      <span className="w-[69px]">Frame-16</span>
      <span className="flex w-[172px] items-center gap-[5px]"><b className="flex h-3 w-[13px] items-center justify-center rounded-[2px] bg-[#a1a7ae] font-normal leading-none text-[#dfe2e5]">U</b>U: 0, 0, 1.5</span>
      <span className="flex w-[171px] items-center gap-[5px]"><b className="flex h-3 w-[13px] items-center justify-center rounded-[2px] bg-[#a1a7ae] font-normal leading-none text-[#dfe2e5]">G</b>G: 0, 0, 1.5</span>
      <span>N: 0, E: 0</span>
      <span className="ml-auto flex items-center gap-1">
        <Select label="Force unit" value="kN" cls="h-[18px] w-[46px]" box={box} />
        <Select label="Length unit" value="m" cls="h-[18px] w-[46px]" box={box} />
        <button type="button" aria-label="Unit display" className="flex h-[18px] w-[17px] items-center justify-center rounded-[3px] bg-[#e9ebef]">
          <Ic s="size-3" c={T} w={1.500}><path d="M2 2h10l3 3.500L12 9H2zM5 4.500v2M8 4.500v2M11 5.500h.1" /><path d="M1.500 13.500h13M3 12l-1.500 1.500L3 15M13 12l1.500 1.500L13 15" stroke={S} /></Ic>
        </button>
        <span className="flex h-[18px] w-[102px] items-center rounded-[3px] bg-[#e9ebef] px-1">
          <input type="range" aria-label="Zoom" defaultValue={11} className="h-4 w-full appearance-none bg-transparent [&::-webkit-slider-runnable-track]:h-[2px] [&::-webkit-slider-runnable-track]:bg-[#d4d8dd] [&::-webkit-slider-thumb]:-mt-[7px] [&::-webkit-slider-thumb]:h-4 [&::-webkit-slider-thumb]:w-[5px] [&::-webkit-slider-thumb]:appearance-none [&::-webkit-slider-thumb]:rounded-[1px] [&::-webkit-slider-thumb]:bg-[#6b7279]" />
        </span>
        <Select label="Zoom level" value="100%" cls="h-[18px] w-[46px]" box={box} />
      </span>
    </footer>
  );
}

export default function App() {
  return (
    <div className="flex h-screen min-w-[1340px] flex-col overflow-hidden bg-white font-[Inter,sans-serif] text-[10px] leading-[12px]">
      <header className="shrink-0 bg-[#23282b] text-[#b4b8bb]">
        <div className="flex h-[23px] items-center border-t border-[#4b5255] pb-[2px] pl-[5px]">
          <span className="flex size-[14px] items-center justify-center rounded-[2px] bg-[#06b4f5] text-[5px] font-bold text-white">CVL</span>
          <span className="ml-[5px] text-[#a5a9ac]">MIDAS CIVIL NX</span>
          <span className="ml-auto flex items-center gap-[28px] pr-[12px] text-[#8d9194]">
            <button type="button" aria-label="Minimize"><Minus className="size-[9px]" /></button>
            <button type="button" aria-label="Restore"><Restore /></button>
            <button type="button" aria-label="Close window"><X className="size-[10px]" /></button>
          </span>
        </div>
        <nav className="flex h-[23px] items-stretch border-t border-[#1b1f22]">
          <button type="button" aria-label="Main menu" className="flex w-8 items-center gap-[5px] pb-[2px] pl-1 text-white">
            <Menu className="size-[14px]" strokeWidth={2.500} /><Arrow d="d" s="size-[5px]" c="text-white" />
          </button>
          {menusA.map((m) => <button key={m} type="button" className="px-3 pb-[2px]">{m}</button>)}
          <button type="button" className="ml-[2px] w-[57px] bg-[#373b40] pb-[2px] font-bold text-white">Results</button>
          {menusB.map((m) => <button key={m} type="button" className="pb-[2px] pl-3 pr-[13px]">{m}</button>)}
          <span className="ml-auto flex items-center gap-[9px] pb-[2px] pr-[3px] text-[#9ea2a5]">
            <button type="button" aria-label="Search"><Search className="size-3" /></button>
            <button type="button" aria-label="License"><Ic s="size-3" c="#9ea2a5" w={1.400}><path d="M8 8.500L3 14.500H1.500V12l5.500-5C5.500 3 10 .5 12.500 1.800L10.500 4l1.500 1.500 2.200-2C15.500 7 12 10 8 8.500z" /></Ic></button>
            <button type="button" aria-label="Help"><CircleHelp className="size-3" /></button>
            <button type="button" aria-label="Minimize document" className="text-white"><Minus className="size-[9px]" /></button>
            <button type="button" aria-label="Restore document" className="text-white"><Restore /></button>
            <button type="button" aria-label="Close document" className="text-white"><X className="size-[10px]" /></button>
          </span>
        </nav>
      </header>
      <Ribbon />
      <div className="flex h-[29px] shrink-0 items-center border-b border-[#33383d] bg-[#43494f] pb-px pl-2">
        <ToolGroup tools={fileTools} cls="w-20 grid-cols-3" />
        <span className="mx-[3px] h-[22px] w-px bg-[#50565c]" />
        <ToolGroup tools={selectTools} cls="w-[214px] grid-cols-8" />
        <span className="mx-[4px] h-[22px] w-px bg-[#50565c]" />
        <ToolGroup tools={activeTools} cls="w-40 grid-cols-6" />
        <span className="mx-[4px] h-[22px] w-px bg-[#50565c]" />
        <ToolGroup tools={viewTools} cls="w-[214px] grid-cols-8" />
      </div>
      <div className="flex min-h-0 flex-1">
        <LeftPanel />
        <Viewport />
        <RightPanel />
      </div>
      <StatusBar />
    </div>
  );
}
